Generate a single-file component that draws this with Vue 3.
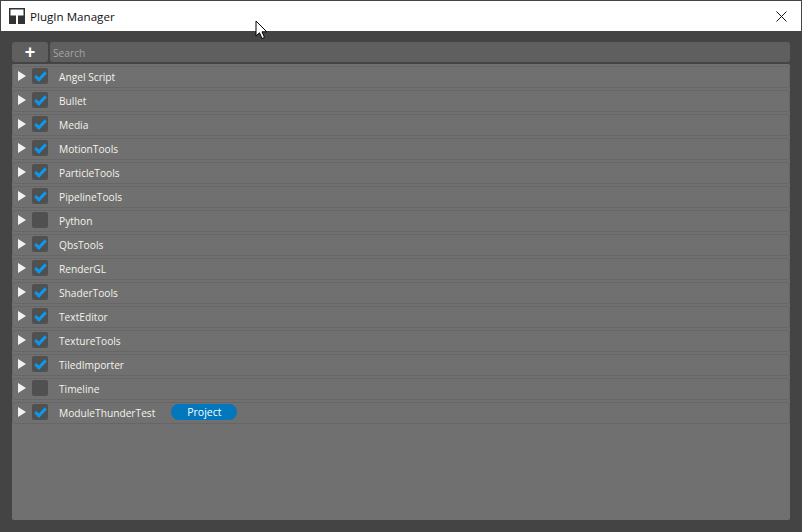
<script setup>
const plugins = [
  { name: 'Angel Script', on: true },
  { name: 'Bullet', on: true },
  { name: 'Media', on: true },
  { name: 'MotionTools', on: true },
  { name: 'ParticleTools', on: true },
  { name: 'PipelineTools', on: true },
  { name: 'Python', on: false },
  { name: 'QbsTools', on: true },
  { name: 'RenderGL', on: true },
  { name: 'ShaderTools', on: true },
  { name: 'TextEditor', on: true },
  { name: 'TextureTools', on: true },
  { name: 'TiledImporter', on: true },
  { name: 'Timeline', on: false },
  { name: 'ModuleThunderTest', on: true, tag: 'Project' },
]
</script>

<template>
  <div class="window">
    <header class="titlebar">
      <svg class="logo" width="16" height="16" viewBox="0 0 16 16">
        <path d="M0 0H16V16H9V7.5H14.5V1.5H1.5V7.5H7V16H0Z" fill="#333" />
      </svg>
      <span class="title">PlugIn Manager</span>
      <svg class="close" width="11" height="11" viewBox="0 0 11 11">
        <path d="M0.5 0.5L10.5 10.5M10.5 0.5L0.5 10.5" stroke="#111" stroke-width="1" fill="none" />
      </svg>
    </header>
    <main class="body">
      <div class="toolbar">
        <button class="add">+</button>
        <div class="search">Search</div>
      </div>
      <ul class="list">
        <li v-for="p in plugins" :key="p.name" class="row">
          <svg class="arrow" width="8" height="10" viewBox="0 0 8 10"><path d="M0 0L8 5L0 10Z" fill="#f2f2f2" /></svg>
          <span class="check">
            <svg v-if="p.on" width="13" height="11" viewBox="0 0 13 11">
              <path d="M1.2 5L4.8 8.8L11.8 1.4" stroke="#0d98ee" stroke-width="3" fill="none" />
            </svg>
          </span>
          <span class="name">{{ p.name }}</span>
          <span v-if="p.tag" class="tag">{{ p.tag }}</span>
        </li>
      </ul>
    </main>
    <svg class="cursor" width="14" height="20" viewBox="0 0 14 20">
      <path d="M1 1V16L4.5 12.8L7 18.5L9.5 17.4L7 11.8H11.8Z" fill="#fff" stroke="#000" stroke-width="1" />
    </svg>
  </div>
</template>

<style>
html, body { margin: 0; background: #444; }
</style>

<style scoped>
.window {
  position: relative;
  width: 802px;
  height: 532px;
  background: #444444;
  display: flex;
  flex-direction: column;
  overflow: hidden;
  font-family: "Open Sans", "Liberation Sans", sans-serif;
}
.titlebar {
  height: 30px;
  margin: 1px 1px 0;
  background: #fff;
  display: flex;
  align-items: center;
  padding: 0 14px 0 8px;
  flex: none;
}
.logo { margin-right: 5px; }
.title { font-size: 11.6px; color: #111; flex: 1; }
.body {
  flex: 1;
  display: flex;
  flex-direction: column;
  padding: 11px 12px 12px;
  gap: 2px;
  min-height: 0;
}
.toolbar { display: flex; gap: 2px; height: 20px; flex: none; }
.add {
  width: 36px;
  border: 0;
  padding: 0;
  border-radius: 3px;
  background: #5f5f5f;
  color: #fff;
  font: 700 18px/20px "Liberation Sans", sans-serif;
}
.search {
  flex: 1;
  border-radius: 3px;
  background: #5f5f5f;
  color: #a4a4a4;
  font-size: 10.2px;
  line-height: 23px;
  padding-left: 3px;
}
.list {
  list-style: none;
  margin: 0;
  padding: 2px 0 0;
  flex: 1;
  background: #707070;
  border-radius: 2px;
}
.row {
  height: 22px;
  margin-bottom: 2px;
  box-sizing: border-box;
  border: 1px solid #666666;
  border-radius: 3px;
  display: flex;
  align-items: center;
  padding-left: 5px;
}
.arrow { margin-top: -2px; margin-right: 6px; flex: none; }
.check {
  width: 16px;
  height: 16px;
  margin-top: -2px;
  border-radius: 2px;
  background: #505050;
  display: flex;
  align-items: center;
  justify-content: center;
  flex: none;
}
.name {
  margin-left: 11px;
  color: #f3f3ea;
  font-size: 10.2px;
}
.tag {
  margin-left: 16px;
  margin-top: -2px;
  width: 66px;
  height: 16px;
  border-radius: 8px;
  background: #0277bd;
  color: #fff;
  font-size: 10.5px;
  line-height: 16px;
  text-align: center;
}
.cursor { position: absolute; left: 255px; top: 20px; }
</style>
